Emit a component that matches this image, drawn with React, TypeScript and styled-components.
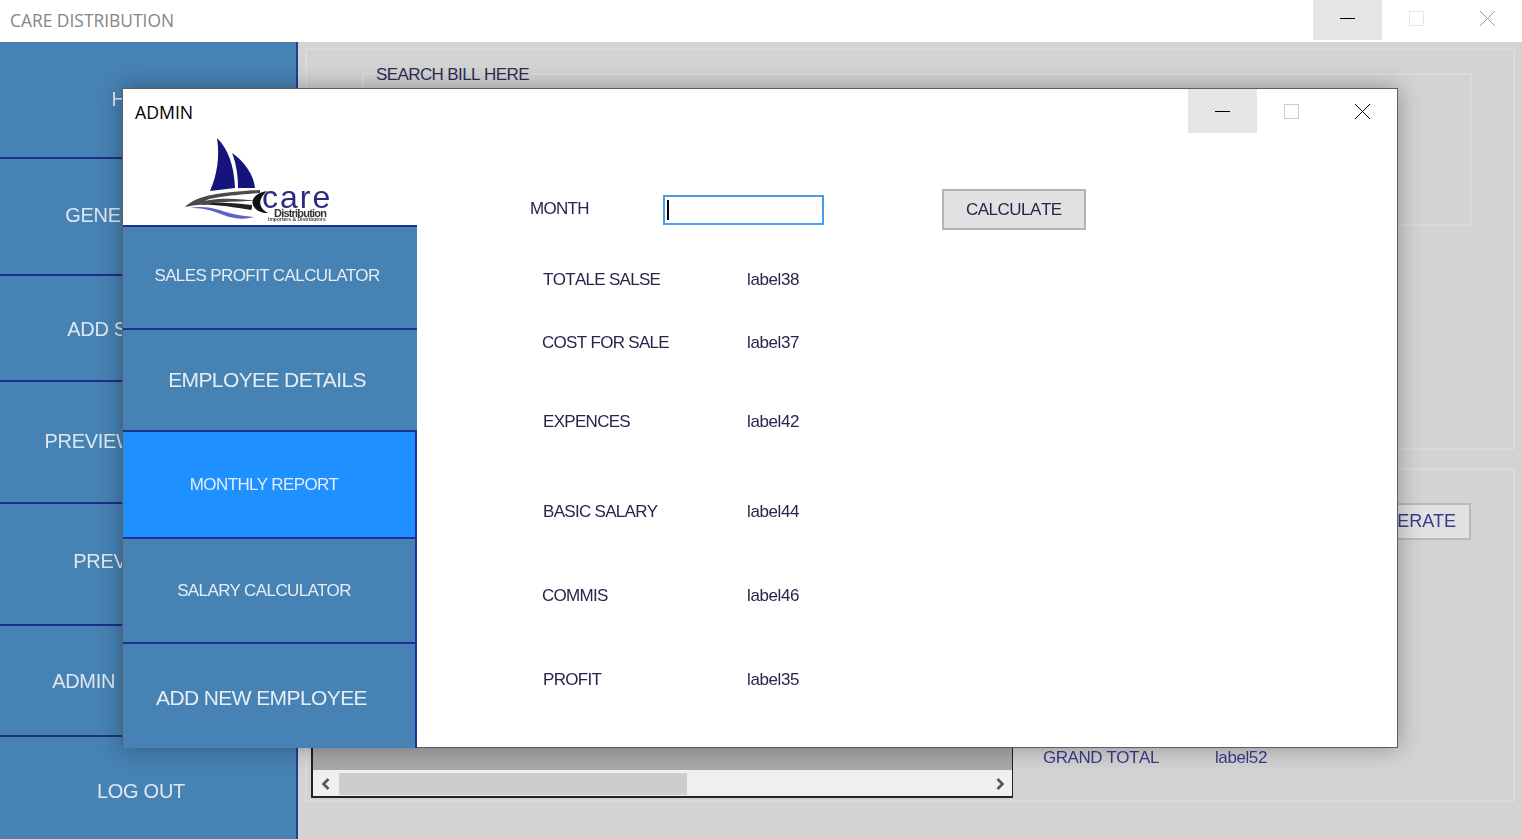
import styled, { createGlobalStyle } from "styled-components"

const GlobalStyle = createGlobalStyle`
    html, body {
        margin: 0;
        padding: 0;
        height: 100%;
        overflow: hidden;
        background: #d3d3d3;
    }

    * {
        box-sizing: border-box;
    }
`

const mainMenu = [
    { label: "HOME", height: 117, top: 0, bottom: 0 },
    { label: "GENERATE BILL", height: 117, top: 0, bottom: 2 },
    { label: "ADD SHIPMENT", height: 106, top: 2, bottom: 0 },
    { label: "PREVIEW CUSTOMS", height: 122, top: 0, bottom: 2 },
    { label: "PREVIEW BILL", height: 122, top: 0, bottom: 6 },
    { label: "ADMIN INTERFACE", height: 111, top: 2, bottom: 0 },
    { label: "LOG OUT", height: 102, top: 6, bottom: 0 },
]

const adminMenu = [
    { label: "SALES PROFIT CALCULATOR", height: 103, size: 17, shift: 6, top: 0, bottom: 3, edge: false, active: false },
    { label: "EMPLOYEE DETAILS", height: 102, size: 21, shift: 6, top: 0, bottom: 0, edge: false, active: false },
    { label: "MONTHLY REPORT", height: 107, size: 17, shift: 10, top: 0, bottom: 0, edge: true, active: true },
    { label: "SALARY CALCULATOR", height: 105, size: 17, shift: 10, top: 0, bottom: 0, edge: true, active: false },
    { label: "ADD NEW EMPLOYEE", height: 104, size: 21, shift: 15, top: 4, bottom: 0, edge: true, active: false },
]

const results = [
    { label: "TOTALE SALSE", value: "label38", gap: 0, indent: 1 },
    { label: "COST FOR SALE", value: "label37", gap: 42, indent: 0 },
    { label: "EXPENCES", value: "label42", gap: 58, indent: 1 },
    { label: "BASIC SALARY", value: "label44", gap: 69, indent: 1 },
    { label: "COMMIS", value: "label46", gap: 63, indent: 0 },
    { label: "PROFIT", value: "label35", gap: 63, indent: 1 },
]

const MinGlyph = () => (
    <svg width="15" height="15" viewBox="0 0 15 15">
        <path d="M0 7.5H15" stroke="currentColor" strokeWidth="1" />
    </svg>
)

const MaxGlyph = () => (
    <svg width="15" height="15" viewBox="0 0 15 15">
        <rect x="0.5" y="0.5" width="14" height="14" fill="none" stroke="currentColor" />
    </svg>
)

const CloseGlyph = () => (
    <svg width="15" height="15" viewBox="0 0 15 15">
        <path d="M0 0L15 15M15 0L0 15" stroke="currentColor" strokeWidth="1" />
    </svg>
)

const Chevron = ({ flip }: { flip?: boolean }) => (
    <svg width="10" height="12" viewBox="0 0 10 12">
        <path
            d={flip ? "M2.5 1L7.5 6L2.5 11" : "M7.5 1L2.5 6L7.5 11"}
            fill="none"
            stroke="#555"
            strokeWidth="2.6"
        />
    </svg>
)

const Logo = () => (
    <LogoSvg width="150" height="88" viewBox="0 0 150 88">
        <path d="M35 1C46 12 52 28 53 51L28 54C35 38 38 20 35 1Z" fill="#14147a" />
        <path d="M50 16C62 24 72 38 73 51L56 51C56 38 54 26 50 16Z" fill="#14147a" />
        <path d="M3 70C14 60 28 56 78 53L78 56C50 58 30 60 22 64C40 60 60 62 76 64C50 64 24 66 3 70Z" fill="#4a4a4a" />
        <path d="M16 68C34 64 54 66 70 68C70 71 70 72 69 73C50 70 32 67 16 68Z" fill="#222" />
        <path d="M8 71C24 68 34 72 44 75C54 78 62 79 72 80C58 84 46 80 36 76C26 72 18 71 8 71Z" fill="#5f5fc4" />
        <path d="M85 54C72 56 68 64 72 70C75 74 80 76 86 76C78 72 74 64 85 54Z" fill="#111" />
        <LogoCare x="80" y="71">care</LogoCare>
        <LogoSub x="92" y="80">Distribution</LogoSub>
        <LogoFine x="86" y="84">Importers &amp; Distributors</LogoFine>
    </LogoSvg>
)

const App = () => {
    return (
        <>
            <GlobalStyle />
            <TitleBar>
                <TitleText>CARE DISTRIBUTION</TitleText>
                <WindowButtons>
                    <WindowButton $hover $height={40} $lift={3}><MinGlyph /></WindowButton>
                    <WindowButton $color="#e6e6e6" $height={40} $lift={3}><MaxGlyph /></WindowButton>
                    <WindowButton $color="#9a9a9a" $height={40} $lift={3}><CloseGlyph /></WindowButton>
                </WindowButtons>
            </TitleBar>

            <Layout>
                <Sidebar>
                    {mainMenu.map((item) => (
                        <SideItem key={item.label} $height={item.height} $top={item.top} $bottom={item.bottom}>
                            {item.label}
                        </SideItem>
                    ))}
                </Sidebar>

                <Main>
                    <UpperPanel>
                        <SearchGroup>
                            <Legend>SEARCH BILL HERE</Legend>
                        </SearchGroup>
                    </UpperPanel>

                    <LowerPanel>
                        <GridView>
                            <GridFill />
                            <ScrollBar>
                                <ScrollArrow><Chevron /></ScrollArrow>
                                <ScrollTrack>
                                    <ScrollThumb />
                                </ScrollTrack>
                                <ScrollArrow><Chevron flip /></ScrollArrow>
                            </ScrollBar>
                        </GridView>

                        <Totals>
                            <GenerateButton>GENERATE</GenerateButton>
                            <TotalRow>
                                <BackLabel>GRAND TOTAL</BackLabel>
                                <BackValue>label52</BackValue>
                            </TotalRow>
                        </Totals>
                    </LowerPanel>
                </Main>
            </Layout>

            <Modal>
                <ModalHead>
                    <ModalTitle>ADMIN</ModalTitle>
                    <WindowButtons>
                        <WindowButton $hover $height={44} $lift={0}><MinGlyph /></WindowButton>
                        <WindowButton $color="#cccccc" $height={44} $lift={0}><MaxGlyph /></WindowButton>
                        <WindowButton $color="#000" $height={44} $lift={0}><CloseGlyph /></WindowButton>
                    </WindowButtons>
                </ModalHead>

                <ModalBody>
                    <AdminNav>
                        <LogoBox>
                            <Logo />
                        </LogoBox>
                        {adminMenu.map((item) => (
                            <AdminNavItem
                                key={item.label}
                                $height={item.height}
                                $size={item.size}
                                $shift={item.shift}
                                $top={item.top}
                                $bottom={item.bottom}
                                $edge={item.edge}
                                $active={item.active}
                            >
                                {item.label}
                            </AdminNavItem>
                        ))}
                    </AdminNav>

                    <Report>
                        <MonthRow>
                            <MonthLabel>MONTH</MonthLabel>
                            <MonthInput>
                                <Caret />
                            </MonthInput>
                            <CalculateButton>CALCULATE</CalculateButton>
                        </MonthRow>

                        <ResultList>
                            {results.map((row) => (
                                <ResultRow key={row.value} $gap={row.gap}>
                                    <ResultName $indent={row.indent}>{row.label}</ResultName>
                                    <ResultValue>{row.value}</ResultValue>
                                </ResultRow>
                            ))}
                        </ResultList>
                    </Report>
                </ModalBody>
            </Modal>
        </>
    )
}

const TitleBar = styled.header`
    display: flex;
    align-items: flex-start;
    justify-content: space-between;
    height: 42px;
    background: #fff;
`

const TitleText = styled.span`
    padding: 8px 0 0 10px;
    font-family: "Open Sans", sans-serif;
    font-size: 17.4px;
    line-height: 24px;
    color: #858585;
`

const WindowButtons = styled.div`
    display: flex;
`

const WindowButton = styled.div<{ $hover?: boolean; $color?: string; $height: number; $lift: number }>`
    display: flex;
    align-items: center;
    justify-content: center;
    width: 69px;
    height: ${(p) => p.$height}px;
    padding-bottom: ${(p) => p.$lift}px;
    background: ${(p) => (p.$hover ? "#e5e5e5" : "transparent")};
    color: ${(p) => p.$color ?? "#000"};

    &:last-child {
        margin-left: 2px;
    }
`

const Layout = styled.div`
    display: flex;
    height: 797px;
`

const Sidebar = styled.nav`
    width: 298px;
    flex-shrink: 0;
    background: #4682b4;
    border-right: 2px solid #23408f;
`

const SideItem = styled.div<{ $height: number; $top: number; $bottom: number }>`
    display: flex;
    align-items: center;
    justify-content: center;
    height: ${(p) => p.$height}px;
    padding: ${(p) => p.$top}px 14px ${(p) => p.$bottom}px 0;
    border-bottom: 2px solid #1c2f8a;
    font-family: "Liberation Sans", sans-serif;
    font-size: 20px;
    letter-spacing: -0.3px;
    white-space: nowrap;
    color: #dfe8f0;
    filter: blur(0.3px);

    &:last-child {
        border-bottom: none;
    }
`

const Main = styled.main`
    display: flex;
    flex: 1;
    flex-direction: column;
    gap: 18px;
    padding: 6px 7px 0;
`

const UpperPanel = styled.section`
    height: 402px;
    padding: 23px 41px 0 55px;
    border: 2px solid #dadada;
`

const SearchGroup = styled.div`
    position: relative;
    height: 153px;
    border: 2px solid #dadada;
`

const Legend = styled.span`
    position: absolute;
    top: -11px;
    left: 10px;
    padding: 0 2px;
    background: #d3d3d3;
    font-family: "Liberation Sans", sans-serif;
    font-size: 17px;
    line-height: 21px;
    letter-spacing: -0.6px;
    font-kerning: none;
    white-space: nowrap;
    color: #2c2c55;
`

const LowerPanel = styled.section`
    display: flex;
    height: 334px;
    padding: 12px 0 2px 4px;
    border: 2px solid #dadada;
`

const GridView = styled.div`
    display: flex;
    flex-direction: column;
    width: 702px;
    border-left: 2px solid #222;
    border-right: 1px solid #222;
    border-bottom: 2px solid #222;
`

const GridFill = styled.div`
    flex: 1;
    background: #a9a9a9;
`

const ScrollBar = styled.div`
    display: flex;
    align-items: center;
    height: 26px;
    padding-top: 1px;
    background: #f0f0f0;
`

const ScrollArrow = styled.span`
    display: flex;
    align-items: center;
    justify-content: center;
    width: 25px;
    height: 22px;
`

const ScrollTrack = styled.div`
    flex: 1;
    height: 22px;
    padding-left: 1px;
`

const ScrollThumb = styled.div`
    width: 348px;
    height: 22px;
    background: #cdcdcd;
`

const Totals = styled.div`
    display: flex;
    flex: 1;
    flex-direction: column;
    justify-content: space-between;
    padding: 21px 42px 30px 30px;
`

const GenerateButton = styled.div`
    align-self: flex-end;
    width: 150px;
    height: 37px;
    padding-right: 13px;
    border: 2px solid #b9b9b9;
    background: #e1e1e1;
    text-align: right;
    font-family: "Liberation Sans", sans-serif;
    font-size: 18px;
    line-height: 33px;
    color: #3a3a8c;
    filter: blur(0.3px);
`

const TotalRow = styled.div`
    display: flex;
    gap: 56px;
`

const BackLabel = styled.span`
    font-family: "Liberation Sans", sans-serif;
    font-size: 17px;
    line-height: 21px;
    letter-spacing: -0.45px;
    font-kerning: none;
    color: #3a3a8c;
    filter: blur(0.3px);
`

const BackValue = styled(BackLabel)`
    letter-spacing: -0.4px;
`

const Modal = styled.section`
    position: absolute;
    top: 88px;
    left: 122px;
    display: flex;
    flex-direction: column;
    width: 1276px;
    height: 660px;
    border: 1px solid #5f5f5f;
    background: #fff;
    box-shadow: 0 0 22px rgba(0, 0, 0, 0.32);
`

const ModalHead = styled.div`
    display: flex;
    justify-content: space-between;
    height: 44px;
`

const ModalTitle = styled.span`
    padding: 11px 0 0 12px;
    font-family: "Open Sans", sans-serif;
    font-size: 17.7px;
    line-height: 24px;
    color: #000;
`

const ModalBody = styled.div`
    display: flex;
    flex: 1;
    min-height: 0;
`

const AdminNav = styled.nav`
    width: 294px;
    flex-shrink: 0;
`

const LogoBox = styled.div`
    display: flex;
    align-items: flex-end;
    justify-content: center;
    height: 94px;
    padding-right: 26px;
    border-bottom: 2px solid #1c2f9a;
`

const LogoSvg = styled.svg`
    display: block;
    filter: blur(0.5px);
`

const LogoCare = styled.text`
    font-family: "Liberation Sans", sans-serif;
    font-size: 32px;
    letter-spacing: 2px;
    fill: #2a2a80;
`

const LogoSub = styled.text`
    font-family: "Liberation Sans", sans-serif;
    font-size: 11px;
    font-weight: 700;
    letter-spacing: -0.8px;
    fill: #333;
`

const LogoFine = styled.text`
    font-family: "Liberation Sans", sans-serif;
    font-size: 5px;
    font-weight: 700;
    fill: #444;
`

const AdminNavItem = styled.div<{
    $height: number
    $size: number
    $shift: number
    $top: number
    $bottom: number
    $edge: boolean
    $active: boolean
}>`
    display: flex;
    align-items: center;
    justify-content: center;
    height: ${(p) => p.$height}px;
    padding: ${(p) => p.$top}px ${(p) => p.$shift}px ${(p) => p.$bottom}px 0;
    border-bottom: 2px solid #1c2f9a;
    border-right: ${(p) => (p.$edge ? "2px solid #1c2f9a" : "none")};
    background: ${(p) => (p.$active ? "#1e90ff" : "#4682b4")};
    font-family: "Liberation Sans", sans-serif;
    font-size: ${(p) => p.$size}px;
    letter-spacing: -0.6px;
    white-space: nowrap;
    color: #e6edf4;
    filter: blur(0.25px);

    &:last-child {
        border-bottom: none;
    }
`

const Report = styled.div`
    flex: 1;
    padding-top: 56px;
`

const MonthRow = styled.div`
    display: flex;
    align-items: center;
    height: 41px;
    padding-left: 113px;
`

const FieldLabel = styled.span`
    font-family: "Liberation Sans", sans-serif;
    font-size: 17px;
    line-height: 21px;
    letter-spacing: -0.7px;
    font-kerning: none;
    color: #26264a;
    filter: blur(0.3px);
`

const MonthLabel = styled(FieldLabel)`
    margin-bottom: 2px;
`

const MonthInput = styled.div`
    display: flex;
    align-items: center;
    width: 161px;
    height: 30px;
    margin: 0 118px 0 74px;
    padding-left: 2px;
    border: 2px solid #4a9be8;
`

const Caret = styled.span`
    width: 2px;
    height: 20px;
    background: #000;
`

const CalculateButton = styled.div`
    display: flex;
    align-items: center;
    justify-content: center;
    width: 144px;
    height: 41px;
    border: 2px solid #b4b4b4;
    background: #e1e1e1;
    font-family: "Liberation Sans", sans-serif;
    font-size: 17px;
    letter-spacing: -0.5px;
    font-kerning: none;
    color: #26264a;
    filter: blur(0.25px);
`

const ResultList = styled.div`
    display: flex;
    flex-direction: column;
    padding-top: 39px;
    padding-left: 125px;
`

const ResultRow = styled.div<{ $gap: number }>`
    display: flex;
    margin-top: ${(p) => p.$gap}px;
`

const ResultName = styled(FieldLabel)<{ $indent: number }>`
    width: 205px;
    padding-left: ${(p) => p.$indent}px;
`

const ResultValue = styled(FieldLabel)`
    letter-spacing: -0.4px;
`

export default App
